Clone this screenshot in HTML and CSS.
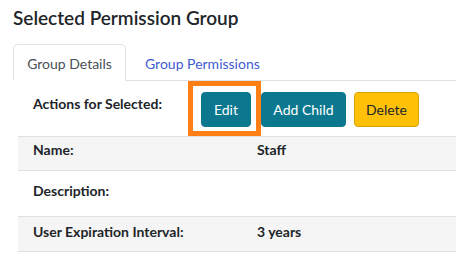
FILE: index.html
```html
<!DOCTYPE html>
<html lang="en">
  <head>
    <meta charset="UTF-8" />
    <title>Selected Permission Group</title>
    <link rel="stylesheet" href="styles.css">
  </head>
  <body>
    <h2 class="title">Selected Permission Group</h2>

    <ul class="tabs">
      <li class="tab active">Group Details</li>
      <li class="tab">Group Permissions</li>
    </ul>

    <div class="details">
      <div class="actions">
        <div class="actions-label">Actions for Selected:</div>
        <div class="actions-buttons">
          <span class="highlight">
            <button type="button" class="btn btn-teal btn-edit">Edit</button>
          </span>
          <button type="button" class="btn btn-teal btn-add">Add Child</button>
          <button type="button" class="btn btn-warning">Delete</button>
        </div>
      </div>

      <div class="row striped row-name">
        <div class="cell label">Name:</div>
        <div class="cell value">Staff</div>
      </div>
      <div class="row row-desc">
        <div class="cell label">Description:</div>
        <div class="cell value"></div>
      </div>
      <div class="row striped row-expiry">
        <div class="cell label">User Expiration Interval:</div>
        <div class="cell value">3 years</div>
      </div>
    </div>
  </body>
</html>
```

FILE: styles.css
```css
:root {
  --text: #212529;
  --border: #dee2e6;
  --stripe: #f5f5f5;
  --teal: #0b7890;
  --warning: #ffc107;
  --link: #3f5bd4;
  --orange: #fd7e14;
}

* {
  margin: 0;
  padding: 0;
  box-sizing: border-box;
}

body {
  font-family: 'Lato', 'Open Sans', sans-serif;
  color: var(--text);
  background: #ffffff;
  padding: 0 0 0 13px;
  font-size: 14px;
  line-height: 20px;
  overflow: hidden;
}

.title {
  font-size: 19px;
  font-weight: 600;
  line-height: 26px;
  padding-top: 5px;
  height: 44px;
}

.tabs {
  list-style: none;
  display: flex;
  border-bottom: 1px solid var(--border);
  height: 37px;
}

.tab {
  width: 113px;
  padding-top: 9px;
  text-align: center;
  color: var(--link);
  border: 1px solid transparent;
  border-top-left-radius: 5px;
  border-top-right-radius: 5px;
}

.tab + .tab {
  width: auto;
  padding-left: 18px;
}

.tab.active {
  color: #495057;
  border-color: var(--border) var(--border) #ffffff;
  height: 37px;
}

.details {
  margin-left: 5px;
}

.actions {
  display: flex;
  height: 56px;
  border-bottom: 1px solid var(--border);
}

.actions-label {
  width: 183px;
  padding: 13px 0 0 15px;
  font-weight: 700;
}

.actions-buttons {
  display: flex;
  align-items: flex-start;
  padding-top: 11px;
}

.btn {
  font-family: inherit;
  font-size: 14px;
  height: 35px;
  border: 1px solid transparent;
  border-radius: 4px;
  cursor: pointer;
}

.btn-teal {
  background: var(--teal);
  border-color: var(--teal);
  color: #ffffff;
}

.btn-edit {
  width: 50px;
}

.btn-add {
  width: 85px;
  margin-left: 10px;
}

.btn-warning {
  width: 65px;
  margin-left: 8px;
  background: var(--warning);
  border-color: #d9a406;
  color: var(--text);
}

.highlight {
  position: relative;
  display: inline-flex;
}

.highlight::after {
  content: "";
  position: absolute;
  top: -11px;
  right: -10px;
  bottom: -9px;
  left: -13px;
  border: 5px solid var(--orange);
  pointer-events: none;
}

.row {
  display: flex;
  border-bottom: 1px solid var(--border);
  font-weight: 700;
}

.row.striped {
  background: var(--stripe);
}

.cell {
  padding: 0 15px;
}

.cell.label {
  width: 224px;
}

.row-name {
  height: 34px;
  padding-top: 3px;
}

.row-desc {
  height: 46px;
  padding-top: 10px;
}

.row-expiry {
  height: 35px;
  padding-top: 5px;
}
```
